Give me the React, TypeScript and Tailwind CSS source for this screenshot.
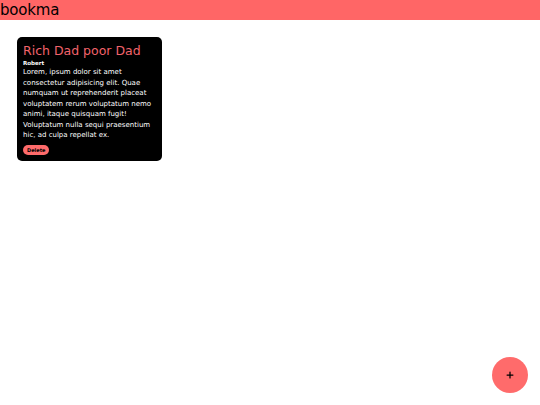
import { Plus } from 'lucide-react';

const books = [
  {
    id: 1,
    title: 'Rich Dad poor Dad',
    author: 'Robert',
    body: 'Lorem, ipsum dolor sit amet consectetur adipisicing elit. Quae numquam ut reprehenderit placeat voluptatem rerum voluptatum nemo animi, itaque quisquam fugit! Voluptatum nulla sequi praesentium hic, ad culpa repellat ex.',
  },
];

function BookCard({ book }: { book: (typeof books)[number] }) {
  return (
    <div className="w-[145px] rounded-[5px] bg-black px-[6px] pt-[6px] pb-[6px] text-white">
      <h2 className="text-[12.5px] leading-[16px] text-[#f2636b]">{book.title}</h2>
      <p className="text-[5.5px] font-bold leading-[8px]">{book.author}</p>
      <p className="text-[7px] leading-[10.5px]">{book.body}</p>
      <button className="mt-[4px] block rounded-full bg-[#ff6b6b] px-[4px] py-[2px] text-[5px] leading-[6px] font-semibold text-black">
        Delete
      </button>
    </div>
  );
}

export default function App() {
  return (
    <div className="min-h-screen bg-white font-['DejaVu_Sans',sans-serif]">
      <header className="h-5 bg-[#ff6666]">
        <h1 className="text-[15px] font-medium leading-[20px] tracking-[-0.2px] text-black">bookma</h1>
      </header>
      <main className="flex flex-wrap gap-4 px-[17px] pt-[17px]">
        {books.map((b) => (
          <BookCard key={b.id} book={b} />
        ))}
      </main>
      <button className="fixed right-3 bottom-3 flex h-9 w-9 items-center justify-center rounded-full bg-[#ff6b6b] text-black">
        <Plus className="h-[10px] w-[10px]" strokeWidth={3} />
      </button>
    </div>
  );
}
